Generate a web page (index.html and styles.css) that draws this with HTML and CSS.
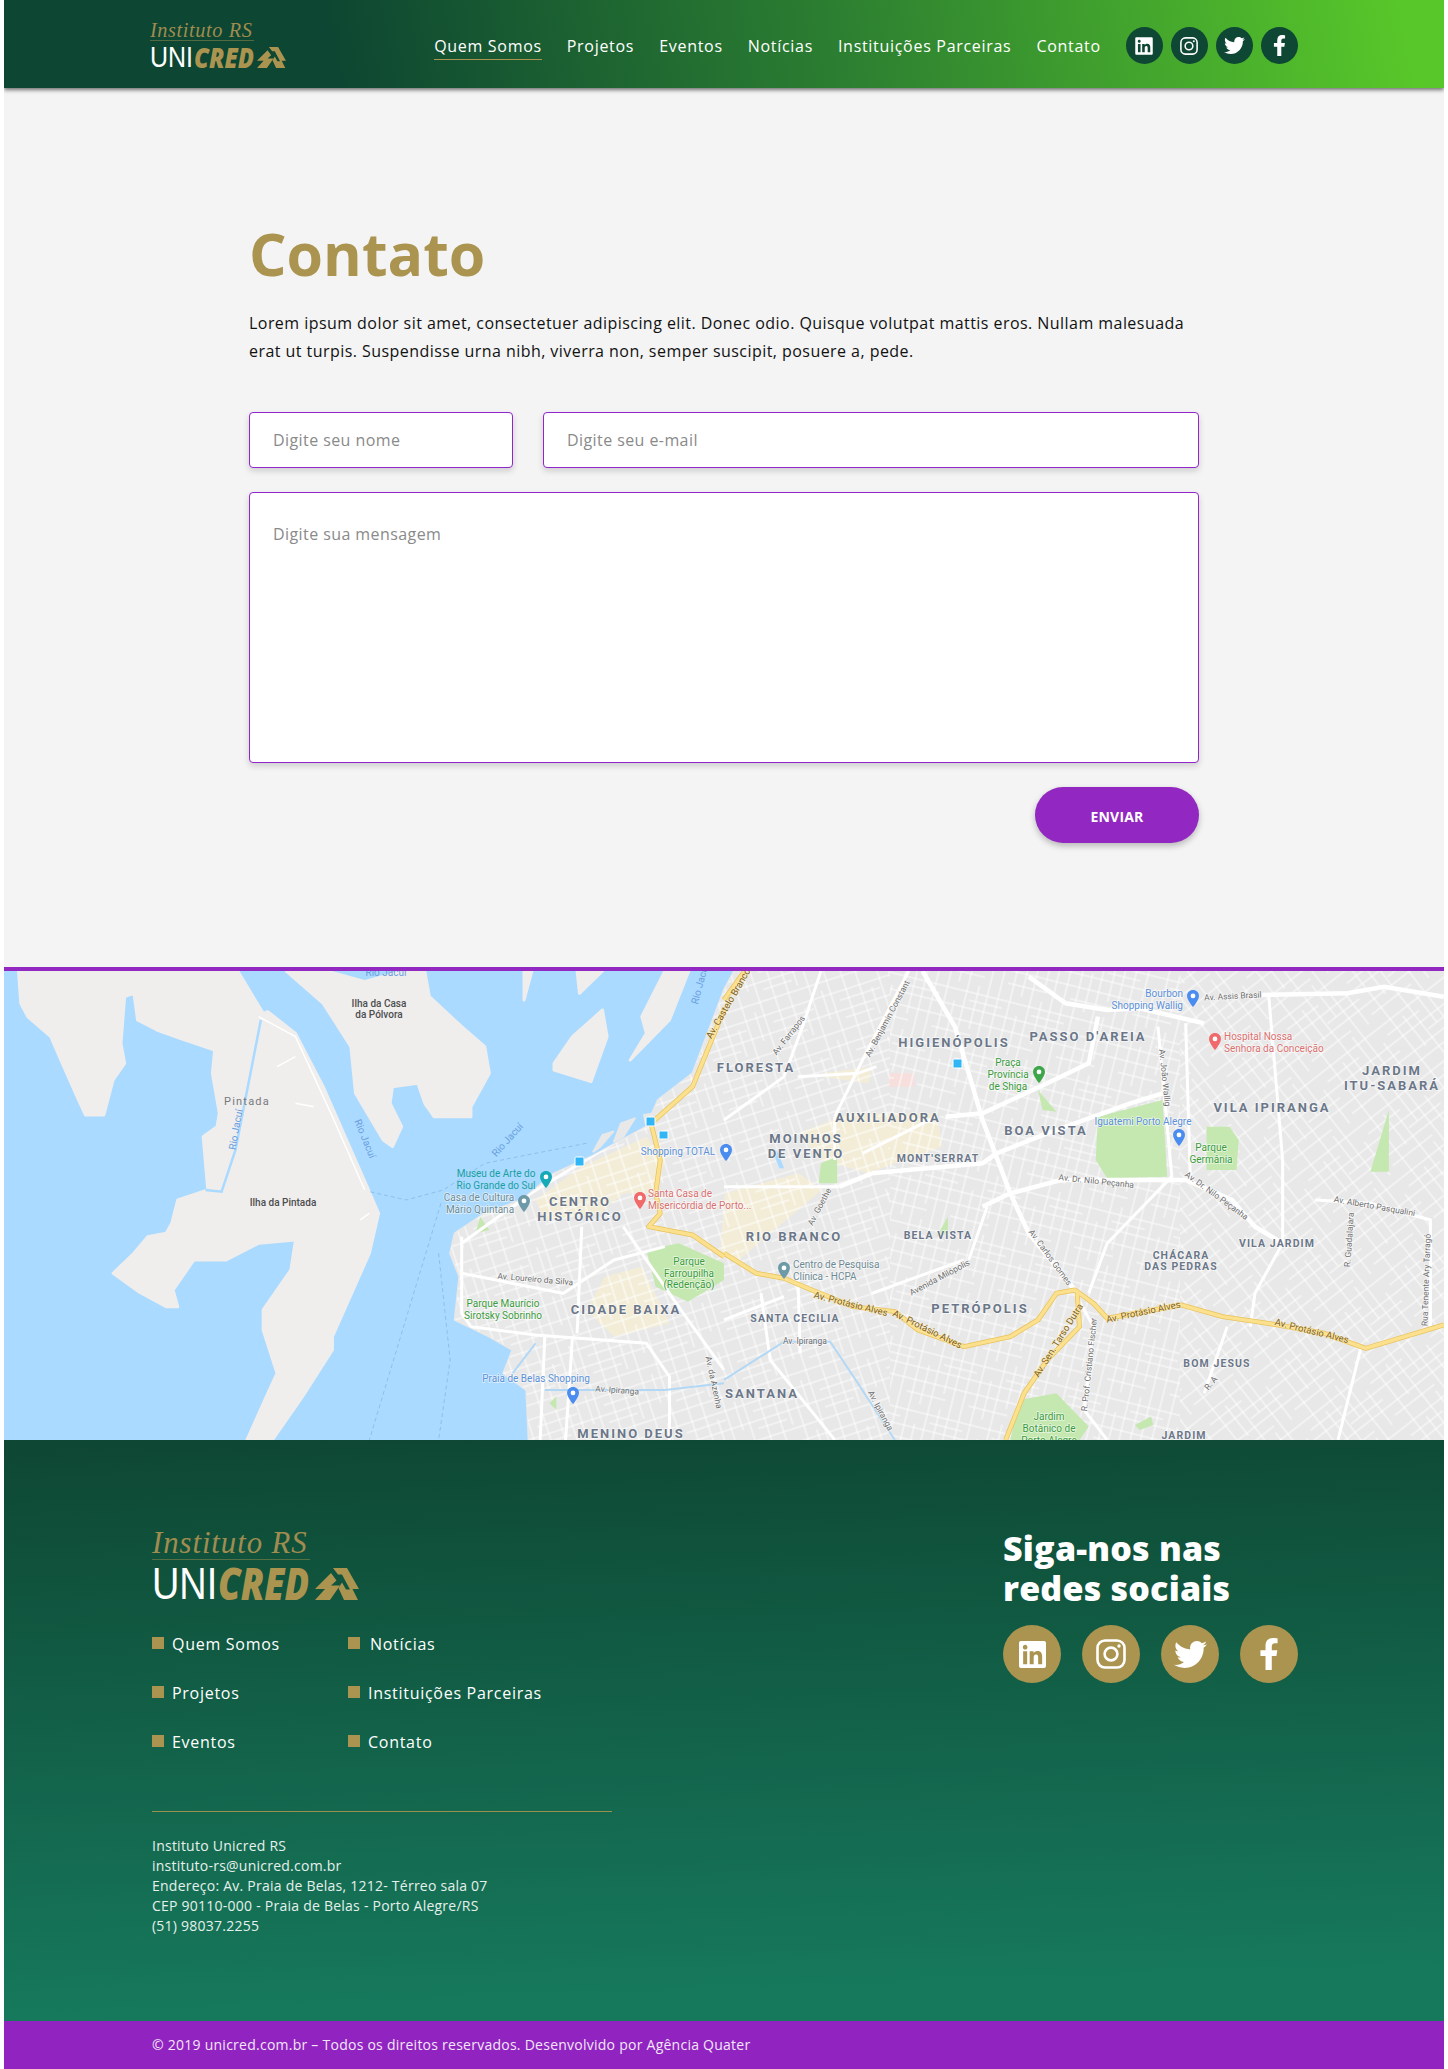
FILE: index.html
```html
<!DOCTYPE html>
<html lang="pt-BR">
<head>
<meta charset="utf-8">
<title>Contato - Instituto Unicred RS</title>
<link rel="stylesheet" href="styles.css">
</head>
<body>
<svg class="defs" width="0" height="0" aria-hidden="true">
  <defs>
    <symbol id="i-linkedin" viewBox="0 0 448 512"><path d="M416 32H31.9C14.3 32 0 46.5 0 64.3v383.4C0 465.5 14.3 480 31.9 480H416c17.6 0 32-14.5 32-32.3V64.3c0-17.8-14.4-32.3-32-32.3zM135.4 416H69V202.2h66.5V416zm-33.2-243c-21.3 0-38.5-17.3-38.5-38.5S80.9 96 102.2 96c21.2 0 38.5 17.3 38.5 38.5 0 21.3-17.2 38.5-38.5 38.5zm282.1 243h-66.4V312c0-24.8-.5-56.7-34.5-56.7-34.6 0-39.9 27-39.9 54.9V416h-66.4V202.2h63.7v29.2h.9c8.9-16.8 30.6-34.5 62.9-34.5 67.2 0 79.7 44.3 79.7 101.9V416z"/></symbol>
    <symbol id="i-instagram" viewBox="0 0 30 30"><rect x="1.5" y="1.5" width="27" height="27" rx="7.5" fill="none" stroke="currentColor" stroke-width="2.6"/><circle cx="15" cy="15" r="6.4" fill="none" stroke="currentColor" stroke-width="2.6"/><circle cx="23" cy="7" r="1.7" fill="currentColor"/></symbol>
    <symbol id="i-twitter" viewBox="0 0 512 512"><path d="M459.37 151.716c.325 4.548.325 9.097.325 13.645 0 138.72-105.583 298.558-298.558 298.558-59.452 0-114.68-17.219-161.137-47.106 8.447.974 16.568 1.299 25.34 1.299 49.055 0 94.213-16.568 130.274-44.832-46.132-.975-84.792-31.188-98.112-72.772 6.498.974 12.995 1.624 19.818 1.624 9.421 0 18.843-1.3 27.614-3.573-48.081-9.747-84.143-51.98-84.143-102.985v-1.299c13.969 7.797 30.214 12.67 47.431 13.319-28.264-18.843-46.781-51.005-46.781-87.391 0-19.492 5.197-37.36 14.294-52.954 51.655 63.675 129.3 105.258 216.365 109.807-1.624-7.797-2.599-15.918-2.599-24.04 0-57.828 46.782-104.934 104.934-104.934 30.213 0 57.502 12.67 76.67 33.137 23.715-4.548 46.456-13.32 66.599-25.34-7.798 24.366-24.366 44.833-46.132 57.827 21.117-2.273 41.584-8.122 60.426-16.243-14.292 20.791-32.161 39.308-52.628 54.253z"/></symbol>
    <symbol id="i-facebook" viewBox="0 0 320 512"><path d="M279.14 288l14.22-92.66h-88.91v-60.13c0-25.35 12.42-50.06 52.24-50.06h40.42V6.26S260.43 0 225.36 0c-73.22 0-121.08 44.38-121.08 124.72v70.62H22.89V288h81.39v224h100.17V288z"/></symbol>
    <symbol id="i-mark" viewBox="0 0 44 32"><path d="M18 0H32L44 21H37.5L43 32H29L23.5 20L27 14.5L31 21.5H35L27 6.5H23Z"/><path d="M16 5L21.5 12.5L16 17.5H25L15 32H0L10 21H0Z"/></symbol>
    <symbol id="i-pin" viewBox="0 0 14 20"><path d="M7 0C3 0 0 3 0 7c0 5 7 13 7 13s7-8 7-13c0-4-3-7-7-7z"/><circle cx="7" cy="7" r="2.8" fill="#fff"/></symbol>
  </defs>
</svg>

<div class="page">
  <header class="topbar">
    <a class="logo logo-sm" href="#">
      <span class="logo-script">Instituto RS</span>
      <span class="logo-rule"></span>
      <span class="logo-word"><span class="logo-uni">UNI</span><span class="logo-cred">CRED</span><svg class="logo-mark"><use href="#i-mark"/></svg></span>
    </a>
    <nav class="topnav">
      <a class="topnav-link is-active" href="#">Quem Somos</a>
      <a class="topnav-link" href="#">Projetos</a>
      <a class="topnav-link" href="#">Eventos</a>
      <a class="topnav-link" href="#">Notícias</a>
      <a class="topnav-link" href="#">Instituições Parceiras</a>
      <a class="topnav-link" href="#">Contato</a>
    </nav>
    <div class="social social-sm">
      <a class="social-btn" href="#"><svg class="ico-li"><use href="#i-linkedin"/></svg></a>
      <a class="social-btn" href="#"><svg class="ico-ig"><use href="#i-instagram"/></svg></a>
      <a class="social-btn" href="#"><svg class="ico-tw"><use href="#i-twitter"/></svg></a>
      <a class="social-btn" href="#"><svg class="ico-fb"><use href="#i-facebook"/></svg></a>
    </div>
  </header>

  <main class="contact">
    <div class="contact-inner">
      <h1 class="contact-title">Contato</h1>
      <p class="contact-text">Lorem ipsum dolor sit amet, consectetuer adipiscing elit. Donec odio. Quisque volutpat mattis eros. Nullam malesuada erat ut turpis. Suspendisse urna nibh, viverra non, semper suscipit, posuere a, pede.</p>
      <form class="form">
        <div class="form-row">
          <input class="field field-name" type="text" placeholder="Digite seu nome">
          <input class="field field-mail" type="email" placeholder="Digite seu e-mail">
        </div>
        <textarea class="field field-msg" placeholder="Digite sua mensagem"></textarea>
        <div class="form-actions"><button class="btn" type="button">ENVIAR</button></div>
      </form>
    </div>
  </main>

  <section class="map">
    <svg class="map-svg" width="1440" height="469" viewBox="4 971 1440 469" xmlns="http://www.w3.org/2000/svg">
      <defs>
        <pattern id="st-a" width="70" height="52" patternUnits="userSpaceOnUse" patternTransform="rotate(-18)">
          <path d="M0 6H70M0 15H42M0 25H70M0 33H30M0 44H70M9 0V52M23 0V52M34 12V40M44 0V52M55 0V30M63 0V52" stroke="#fff" stroke-width=".9" fill="none"/>
        </pattern>
        <pattern id="st-b" width="64" height="60" patternUnits="userSpaceOnUse" patternTransform="rotate(14)">
          <path d="M0 8H64M30 16H64M0 24H64M0 37H64M0 50H40M6 0V60M16 20V60M26 0V60M37 0V44M47 0V60M58 0V60" stroke="#fff" stroke-width=".9" fill="none"/>
        </pattern>
        <pattern id="st-c" width="76" height="66" patternUnits="userSpaceOnUse" patternTransform="rotate(-38)">
          <path d="M0 9H76M0 20H40M0 30H76M36 40H76M0 49H76M0 60H50M12 0V66M24 14V52M34 0V66M47 0V40M56 0V66M68 24V66" stroke="#fff" stroke-width=".9" fill="none"/>
        </pattern>
        <clipPath id="land-clip">
          <path transform="translate(0 960) scale(.4617 .3333)" d="M1590 33L1568 90L1500 340L1425 420L1400 500L1280 590L1200 640L1130 720L1050 760L985 820L975 880L995 950L985 1080L1060 1130L1110 1170L1090 1240L1140 1290L1145 1440H3200V33Z"/>
        </clipPath>
      </defs>
      <rect class="m-water" x="4" y="971" width="1440" height="469"/>

      <g transform="translate(0 960) scale(.4617 .3333)">
        <path class="m-island" d="M40 33L45 130L60 170L110 230L135 310L170 420L185 465H225L245 360L270 310L262 250L270 110L290 100L298 180L340 210L390 235L465 270L460 340L475 460L470 500L440 530L450 690L385 720L372 790L360 820L320 830L290 880L245 940L300 995L360 1040H385L375 990L420 900L490 900L560 850L640 840L630 930L570 1050V1110L600 1240L580 1300L535 1440H590L660 1300L720 1170V1130L800 880L820 760L795 680L700 380L640 220L580 155L570 160L515 33Z"/>
        <path class="m-island" d="M620 33L700 130L760 260L770 400L830 540L850 560L870 500L845 430L850 380L905 370L920 430L940 470L1020 470V440L1060 340L1050 260L1000 200L930 110L920 33Z"/>
        <path class="m-island" d="M1305 150L1240 230L1200 310V330L1280 365L1315 230Z"/>
        <path class="m-island" d="M1135 33V120L1152 33Z"/>
        <path class="m-island" d="M1255 100L1305 33H1250Z"/>
        <path class="m-island" d="M1440 33L1390 170L1400 220L1365 300L1450 180L1492 33Z"/>
        <path class="m-water" d="M720 33L790 60L860 33Z"/>
        <path class="m-river" d="M565 180L510 570L480 695L445 690"/>
        <path class="m-ferry" d="M1270 550L1050 610L960 690L880 720L800 695M955 730L800 1440M950 880L975 1200L950 1440"/>
        <path class="m-road-thin" d="M560 170L640 230L720 470L790 690M640 290L600 320M680 440L640 430M780 780L800 760"/>
        <path class="m-land" d="M1590 33L1568 90L1500 340L1425 420L1400 500L1280 590L1200 640L1130 720L1050 760L985 820L975 880L995 950L985 1080L1060 1130L1110 1170L1090 1240L1140 1290L1145 1440H3200V33Z"/>
        <path class="m-land" d="M1395 465L1418 460L1400 500ZM1345 490L1375 475L1350 530L1330 545ZM1305 525L1328 515L1300 560L1285 575Z"/>
      </g>

      <g clip-path="url(#land-clip)">
        <g transform="translate(0 960) scale(.4617 .3333)">
          <path class="m-block" d="M1260 620L1400 530L1440 600L1420 700L1350 700L1300 760L1180 780L1160 720Z"/>
          <path class="m-block" d="M1310 950L1390 920L1450 1090L1330 1130L1270 1050Z"/>
          <path class="m-block" d="M1570 700L1730 640L1780 690L1600 900L1560 880Z"/>
          <path class="m-block" d="M1730 520L1840 460L2030 460L2040 560L1880 640L1780 600Z"/>
          <path class="m-block" d="M1780 340L1890 320L1880 370L1780 350Z"/>
          <path class="m-pink" d="M1925 340H1980V380H1925Z"/>
        </g>
        <rect x="440" y="971" width="450" height="469" fill="url(#st-a)"/>
        <rect x="890" y="971" width="290" height="469" fill="url(#st-b)"/>
        <rect x="1180" y="971" width="270" height="469" fill="url(#st-c)"/>
        <g transform="translate(0 960) scale(.4617 .3333)">
          <path class="m-park" d="M1400 870L1470 850L1568 910V960L1490 1025L1420 980Z"/>
          <path class="m-park" d="M1040 770L1060 810L1030 820Z"/>
          <path class="m-park" d="M1190 1330L1205 1310V1350Z"/>
          <path class="m-road-side" d="M1000 830V1060L1020 1100L1160 1125L1400 1150L1450 1250V1440M1000 940L1220 1000L1330 900L1440 860M1180 1130L1170 1440M1240 1130L1225 1440M1260 800L1250 1120M1400 490L1150 700L1000 850M1350 800L1480 1060L1568 1230"/>
          <path class="m-ipiranga" d="M1160 1150L1110 1240M1180 1290H1440L1568 1270"/>
        </g>
        <g transform="translate(724 960) scale(.4617 .3333)">
          <path class="m-park" d="M810 470L950 420L960 650L830 655L805 600Z"/>
          <path class="m-park" d="M1045 500H1095L1115 540L1110 630H1045Z"/>
          <path class="m-park" d="M640 1320L720 1300L790 1400L770 1440H620Z"/>
          <path class="m-park" d="M680 390L720 455L690 450Z"/>
          <path class="m-park" d="M205 670L210 610L245 590V670Z"/>
          <path class="m-park" d="M1400 635L1440 450V635Z"/>
          <path class="m-park" d="M460 830L485 770L485 820Z"/>
          <path class="m-park" d="M890 1395L925 1370L930 1395L900 1410Z"/>
          <path class="m-water" d="M115 570L130 625H120L110 590Z"/>
          <path class="m-road" d="M430 33L500 200L560 480L620 700L660 820L760 990M660 50L740 130L830 150L900 145L1040 190M480 470L560 460L700 370L790 310L810 170M1165 105L1350 100L1430 80L1559 110M590 580L700 520L880 430L950 400M320 640L560 610L590 580M250 680L320 640M560 740L620 700L730 660H1000L1100 720L1150 800L1210 850"/>
          <path class="m-road-side" d="M210 33L170 200L130 350L0 480M400 33L300 300L240 470M160 350L290 340L330 320M530 900L570 740M1180 110L1210 600V850L1150 1000L1140 1100M940 200L970 650L830 850L790 1000M1000 190L1010 660M1280 720L1400 730L1530 780V1100M1380 1160L1330 1440M320 1000L520 900M80 1000L100 1200L240 1440M160 950L165 1180M760 1000L800 1100L780 1350L830 1440M1090 1100L1040 1300M0 680L250 680M0 1080L130 1010M300 580L460 470M240 600V470"/>
          <path class="m-ipiranga" d="M0 1260L130 1145H230L290 1270L370 1440"/>
          <path class="m-ave-edge" d="M45 33L0 120"/>
          <path class="m-ave" d="M45 33L0 120"/>
          <path class="m-ave-edge" d="M0 880L70 940L130 955L190 990L280 1040L370 1055L420 1110L520 1160L620 1130L680 1080L720 1000L760 990L800 1030L830 1075L990 1035L1080 1070L1200 1095L1300 1120L1390 1165L1559 1095M765 1000L770 1100L700 1200L650 1300L610 1440"/>
          <path class="m-ave" d="M0 880L70 940L130 955L190 990L280 1040L370 1055L420 1110L520 1160L620 1130L680 1080L720 1000L760 990L800 1030L830 1075L990 1035L1080 1070L1200 1095L1300 1120L1390 1165L1559 1095M765 1000L770 1100L700 1200L650 1300L610 1440"/>
        </g>
        <g transform="translate(0 960) scale(.4617 .3333)">
          <path class="m-ave-edge" d="M1568 150L1500 380L1410 490L1430 600L1420 700L1430 760L1405 800L1500 825L1568 890"/>
          <path class="m-ave" d="M1568 150L1500 380L1410 490L1430 600L1420 700L1430 760L1405 800L1500 825L1568 890"/>
        </g>
      </g>

      <!-- pins -->
      <use class="pin-teal" href="#i-pin" x="540" y="1171" width="12" height="17"/>
      <use class="pin-gray" href="#i-pin" x="518" y="1195" width="12" height="17"/>
      <use class="pin-red" href="#i-pin" x="634" y="1192" width="12" height="17"/>
      <use class="pin-blue" href="#i-pin" x="720" y="1144" width="12" height="17"/>
      <use class="pin-blue" href="#i-pin" x="567" y="1387" width="12" height="17"/>
      <use class="pin-gray" href="#i-pin" x="778" y="1262" width="12" height="17"/>
      <use class="pin-blue" href="#i-pin" x="1187" y="990" width="12" height="17"/>
      <use class="pin-red" href="#i-pin" x="1209" y="1033" width="12" height="17"/>
      <use class="pin-green" href="#i-pin" x="1033" y="1066" width="12" height="17"/>
      <use class="pin-blue" href="#i-pin" x="1173" y="1129" width="12" height="17"/>
      <rect class="m-metro" x="646" y="1117" width="9" height="9" rx="1.5"/>
      <rect class="m-metro" x="575" y="1157" width="9" height="9" rx="1.5"/>
      <rect class="m-metro" x="659" y="1131" width="9" height="8" rx="1.5"/>
      <rect class="m-metro" x="953" y="1059" width="9" height="9" rx="1.5"/>

      <!-- labels: islands and river -->
      <text class="t t-dark" x="379" y="1007">Ilha da Casa</text>
      <text class="t t-dark" x="379" y="1018">da Pólvora</text>
      <text class="t t-gray t-spaced" x="247" y="1105">Pintada</text>
      <text class="t t-dark" x="283" y="1206">Ilha da Pintada</text>
      <text class="t t-river" x="386" y="976">Rio Jacuí</text>
      <text class="t t-river" transform="rotate(-80 239 1130)" x="239" y="1130">Rio Jacuí</text>
      <text class="t t-river" transform="rotate(68 362 1140)" x="362" y="1140">Rio Jacuí</text>
      <text class="t t-river" transform="rotate(-48 510 1142)" x="510" y="1142">Rio Jacuí</text>
      <text class="t t-river" transform="rotate(-75 703 985)" x="703" y="985">Rio Jacuí</text>

      <!-- labels: districts -->
      <text class="t t-area" x="580" y="1206">CENTRO</text>
      <text class="t t-area" x="580" y="1221">HISTÓRICO</text>
      <text class="t t-area" x="626" y="1314">CIDADE BAIXA</text>
      <text class="t t-area" x="631" y="1438">MENINO DEUS</text>
      <text class="t t-area" x="756" y="1072">FLORESTA</text>
      <text class="t t-area" x="954" y="1047">HIGIENÓPOLIS</text>
      <text class="t t-area" x="1088" y="1041">PASSO D'AREIA</text>
      <text class="t t-area" x="1392" y="1075">JARDIM</text>
      <text class="t t-area" x="1392" y="1090">ITU-SABARÁ</text>
      <text class="t t-area" x="1272" y="1112">VILA IPIRANGA</text>
      <text class="t t-area" x="888" y="1122">AUXILIADORA</text>
      <text class="t t-area" x="806" y="1143">MOINHOS</text>
      <text class="t t-area" x="806" y="1158">DE VENTO</text>
      <text class="t t-area" x="1046" y="1135">BOA VISTA</text>
      <text class="t t-area" x="794" y="1241">RIO BRANCO</text>
      <text class="t t-area" x="980" y="1313">PETRÓPOLIS</text>
      <text class="t t-area" x="762" y="1398">SANTANA</text>
      <text class="t t-area2" x="938" y="1162">MONT'SERRAT</text>
      <text class="t t-area2" x="938" y="1239">BELA VISTA</text>
      <text class="t t-area2" x="1277" y="1247">VILA JARDIM</text>
      <text class="t t-area2" x="1181" y="1259">CHÁCARA</text>
      <text class="t t-area2" x="1181" y="1270">DAS PEDRAS</text>
      <text class="t t-area2" x="795" y="1322">SANTA CECILIA</text>
      <text class="t t-area2" x="1217" y="1367">BOM JESUS</text>
      <text class="t t-area2" x="1184" y="1439">JARDIM</text>

      <!-- labels: places -->
      <text class="t t-teal" x="496" y="1177">Museu de Arte do</text>
      <text class="t t-teal" x="496" y="1189">Rio Grande do Sul</text>
      <text class="t t-place" x="479" y="1201">Casa de Cultura</text>
      <text class="t t-place" x="480" y="1213">Mário Quintana</text>
      <text class="t t-red t-start" x="648" y="1197">Santa Casa de</text>
      <text class="t t-red t-start" x="648" y="1209">Misericórdia de Porto...</text>
      <text class="t t-blue" x="678" y="1155">Shopping TOTAL</text>
      <text class="t t-green" x="689" y="1265">Parque</text>
      <text class="t t-green" x="689" y="1277">Farroupilha</text>
      <text class="t t-green" x="689" y="1288">(Redenção)</text>
      <text class="t t-green" x="503" y="1307">Parque Maurício</text>
      <text class="t t-green" x="503" y="1319">Sirotsky Sobrinho</text>
      <text class="t t-blue" x="536" y="1382">Praia de Belas Shopping</text>
      <text class="t t-blue t-end" x="1183" y="997">Bourbon</text>
      <text class="t t-blue t-end" x="1183" y="1009">Shopping Wallig</text>
      <text class="t t-red t-start" x="1224" y="1040">Hospital Nossa</text>
      <text class="t t-red t-start" x="1224" y="1052">Senhora da Conceição</text>
      <text class="t t-green" x="1008" y="1066">Praça</text>
      <text class="t t-green" x="1008" y="1078">Província</text>
      <text class="t t-green" x="1008" y="1090">de Shiga</text>
      <text class="t t-blue" x="1143" y="1125">Iguatemi Porto Alegre</text>
      <text class="t t-green" x="1211" y="1151">Parque</text>
      <text class="t t-green" x="1211" y="1163">Germânia</text>
      <text class="t t-place t-start" x="793" y="1268">Centro de Pesquisa</text>
      <text class="t t-place t-start" x="793" y="1280">Clínica - HCPA</text>
      <text class="t t-green" x="1049" y="1420">Jardim</text>
      <text class="t t-green" x="1049" y="1432">Botânico de</text>
      <text class="t t-green" x="1049" y="1444">Porto Alegre</text>

      <!-- labels: streets -->
      <text class="t t-street" transform="rotate(5 535 1282)" x="535" y="1282">Av. Loureiro da Silva</text>
      <text class="t t-street" transform="rotate(4 617 1393)" x="617" y="1393">Av. Ipiranga</text>
      <text class="t t-street" transform="rotate(78 711 1383)" x="711" y="1383">Av. da Azenha</text>
      <text class="t t-street" transform="rotate(-3 1233 999)" x="1233" y="999">Av. Assis Brasil</text>
      <text class="t t-street" transform="rotate(84 1162 1078)" x="1162" y="1078">Av. João Wallig</text>
      <text class="t t-street" transform="rotate(-52 791 1037)" x="791" y="1037">Av. Farrapos</text>
      <text class="t t-street" transform="rotate(-62 890 1020)" x="890" y="1020">Av. Benjamin Constant</text>
      <text class="t t-street" transform="rotate(6 1096 1184)" x="1096" y="1184">Av. Dr. Nilo Peçanha</text>
      <text class="t t-street" transform="rotate(36 1215 1198)" x="1215" y="1198">Av. Dr. Nilo Peçanha</text>
      <text class="t t-street" transform="rotate(10 1374 1209)" x="1374" y="1209">Av. Alberto Pasqualini</text>
      <text class="t t-street" transform="rotate(-62 822 1208)" x="822" y="1208">Av. Goethe</text>
      <text class="t t-street" transform="rotate(54 1048 1259)" x="1048" y="1259">Av. Carlos Gomes</text>
      <text class="t t-street" transform="rotate(-86 1352 1240)" x="1352" y="1240">R. Guadalajara</text>
      <text class="t t-street" transform="rotate(-88 1429 1280)" x="1429" y="1280">Rua Tenente Ary Tarragó</text>
      <text class="t t-street" transform="rotate(-28 941 1280)" x="941" y="1280">Avenida Milópolis</text>
      <text class="t t-street" x="805" y="1344">Av. Ipiranga</text>
      <text class="t t-street" transform="rotate(-84 1092 1365)" x="1092" y="1365">R. Prof. Cristiano Fischer</text>
      <text class="t t-street" transform="rotate(-50 1213 1385)" x="1213" y="1385">R. A</text>
      <text class="t t-street" transform="rotate(62 878 1412)" x="878" y="1412">Av. Ipiranga</text>
      <text class="t t-ave" transform="rotate(-60 731 1005)" x="731" y="1005">Av. Castelo Branco</text>
      <text class="t t-ave" transform="rotate(14 850 1307)" x="850" y="1307">Av. Protásio Alves</text>
      <text class="t t-ave" transform="rotate(26 926 1332)" x="926" y="1332">Av. Protásio Alves</text>
      <text class="t t-ave" transform="rotate(-12 1144 1315)" x="1144" y="1315">Av. Protásio Alves</text>
      <text class="t t-ave" transform="rotate(14 1311 1334)" x="1311" y="1334">Av. Protásio Alves</text>
      <text class="t t-ave" transform="rotate(-58 1061 1342)" x="1061" y="1342">Av. Sen. Tarso Dutra</text>
    </svg>
  </section>

  <footer class="footer">
    <div class="footer-main">
      <div class="footer-left">
        <a class="logo logo-lg" href="#">
          <span class="logo-script">Instituto RS</span>
          <span class="logo-rule"></span>
          <span class="logo-word"><span class="logo-uni">UNI</span><span class="logo-cred">CRED</span><svg class="logo-mark"><use href="#i-mark"/></svg></span>
        </a>
        <ul class="footer-nav">
          <li class="footer-item"><a href="#">Quem Somos</a></li>
          <li class="footer-item footer-item-shift"><a href="#">Notícias</a></li>
          <li class="footer-item"><a href="#">Projetos</a></li>
          <li class="footer-item"><a href="#">Instituições Parceiras</a></li>
          <li class="footer-item"><a href="#">Eventos</a></li>
          <li class="footer-item"><a href="#">Contato</a></li>
        </ul>
        <address class="footer-address">
          Instituto Unicred RS<br>
          instituto-rs@unicred.com.br<br>
          Endereço: Av. Praia de Belas, 1212- Térreo sala 07<br>
          CEP 90110-000 - Praia de Belas - Porto Alegre/RS<br>
          (51) 98037.2255
        </address>
      </div>
      <div class="footer-right">
        <h2 class="follow-title">Siga-nos nas<br>redes sociais</h2>
        <div class="social social-lg">
          <a class="social-btn" href="#"><svg class="ico-li"><use href="#i-linkedin"/></svg></a>
          <a class="social-btn" href="#"><svg class="ico-ig"><use href="#i-instagram"/></svg></a>
          <a class="social-btn" href="#"><svg class="ico-tw"><use href="#i-twitter"/></svg></a>
          <a class="social-btn" href="#"><svg class="ico-fb"><use href="#i-facebook"/></svg></a>
        </div>
      </div>
    </div>
    <div class="copyright">© 2019 unicred.com.br – Todos os direitos reservados. Desenvolvido por Agência Quater</div>
  </footer>
</div>
</body>
</html>
```
FILE: styles.css
```css
* { box-sizing: border-box; }
html, body { margin: 0; padding: 0; background: #fff; }
body { font-family: "Open Sans", "Liberation Sans", sans-serif; color: #111; }
a { color: inherit; text-decoration: none; }
.defs { position: absolute; }
.page { width: 1440px; margin: 0 auto; overflow: hidden; }

/* Header */
.topbar {
  position: relative;
  z-index: 2;
  height: 88px;
  padding-left: 146px;
  display: flex;
  align-items: center;
  background: linear-gradient(80deg, #0d4632 23%, #2c7f31 58%, #58c72a 97%);
  box-shadow: 0 2px 4px rgba(0, 0, 0, .55);
}
.topnav { display: flex; gap: 25px; margin-left: 148px; margin-top: 7px; }
.topnav-link {
  font-size: 16px;
  line-height: 22px;
  padding-bottom: 2px;
  letter-spacing: .7px;
  color: #fff;
  border-bottom: 1px solid transparent;
}
.topnav-link.is-active { border-bottom-color: #ab9450; }

/* Logo */
.logo { display: flex; flex-direction: column; align-items: flex-start; }
.logo-sm { font-size: 29px; }
.logo-lg { font-size: 44px; }
.logo-script {
  display: block;
  font-family: "Liberation Serif", serif;
  font-style: italic;
  font-size: .7em;
  line-height: 1;
  height: 1em;
  letter-spacing: .03em;
  color: #a08c50;
}
.logo-rule { display: block; width: 3.6em; height: 1px; background: rgba(171, 148, 80, .45); }
.logo-word { display: flex; align-items: flex-start; height: .727em; margin-top: .19em; line-height: .727em; }
.logo-uni {
  display: block;
  width: 1.39em;
  font-family: "Liberation Sans", sans-serif;
  color: #fff;
  transform: scaleX(.86);
  transform-origin: 0 50%;
}
.logo-cred {
  display: block;
  width: 2em;
  margin-left: .115em;
  margin-top: -.03em;
  font-family: "Open Sans", sans-serif;
  font-weight: 800;
  font-style: italic;
  color: #ab9450;
  transform: scaleX(.82);
  transform-origin: 0 50%;
}
.logo-mark { width: 1em; height: .727em; margin-left: .19em; fill: #ab9450; }

/* Social */
.social { display: flex; }
.social-btn { display: flex; align-items: center; justify-content: center; border-radius: 50%; }
.social-sm { gap: 8px; margin-left: 25px; margin-top: 3px; }
.social-sm .social-btn { width: 37px; height: 37px; background: #0e4733; color: #fff; fill: #fff; }
.social-sm .ico-li { width: 18px; height: 20px; }
.social-sm .ico-ig { width: 18px; height: 18px; }
.social-sm .ico-tw { width: 21px; height: 21px; }
.social-sm .ico-fb { width: 13px; height: 21px; }
.social-lg { gap: 21px; margin-top: 17px; }
.social-lg .social-btn { width: 58px; height: 58px; background: #ab9450; color: #fff; fill: #fff; }
.social-lg .ico-li { width: 27px; height: 31px; }
.social-lg .ico-ig { width: 30px; height: 30px; }
.social-lg .ico-tw { width: 33px; height: 33px; }
.social-lg .ico-fb { width: 20px; height: 32px; }

/* Contact */
.contact { background: #f4f4f4; padding: 129px 0 124px; }
.contact-inner { width: 950px; margin: 0 auto; }
.contact-title { margin: 0; font-size: 59px; line-height: 72px; font-weight: 700; color: #ab9450; }
.contact-text { margin: 20px 0 47px; font-size: 16px; line-height: 28px; letter-spacing: .45px; color: #111; max-width: 945px; }
.form-row { display: flex; gap: 30px; margin-bottom: 24px; }
.field {
  display: block;
  border: 1px solid #9325cc;
  border-radius: 4px;
  background: #fff;
  box-shadow: 0 3px 6px rgba(0, 0, 0, .16);
  font-family: "Open Sans", sans-serif;
  font-size: 16px;
  letter-spacing: .42px;
  color: #333;
  padding: 0 23px;
  outline: none;
  resize: none;
}
.field::placeholder { color: #8a8a8a; opacity: 1; }
.field-name { width: 264px; height: 56px; }
.field-mail { flex: 1; height: 56px; }
.field-msg { width: 100%; height: 271px; padding-top: 30px; line-height: 22px; }
.form-actions { display: flex; justify-content: flex-end; margin-top: 24px; }
.btn {
  width: 164px;
  height: 56px;
  border: 0;
  border-radius: 28px;
  background: #9227c1;
  color: #fff;
  font-family: "Open Sans", sans-serif;
  font-size: 14px;
  font-weight: 700;
  letter-spacing: .2px;
  padding-top: 4px;
  box-shadow: 0 3px 6px rgba(0, 0, 0, .25);
}

/* Map */
.map { border-top: 4px solid #9227c1; }
.map-svg { display: block; font-family: Roboto, "Liberation Sans", sans-serif; }
.m-water { fill: #aadaff; }
.m-island { fill: #efeeed; stroke: #efeeed; stroke-width: 3px; stroke-linejoin: round; vector-effect: non-scaling-stroke; }
.m-land { fill: #e8e8e8; stroke: #e8e8e8; stroke-width: 2px; stroke-linejoin: round; vector-effect: non-scaling-stroke; }
.m-block { fill: #f8efd2; opacity: .7; }
.m-pink { fill: #f6dfdc; }
.m-park { fill: #c5e8b0; }
.m-river { fill: none; stroke: #aadaff; stroke-width: 2.5px; vector-effect: non-scaling-stroke; }
.m-ferry { fill: none; stroke: #8fbfe8; stroke-width: 1px; stroke-dasharray: 4 3; vector-effect: non-scaling-stroke; }
.m-road-thin { fill: none; stroke: #fff; stroke-width: 1.5px; vector-effect: non-scaling-stroke; }
.m-road { fill: none; stroke: #fff; stroke-width: 4.5px; vector-effect: non-scaling-stroke; }
.m-road-side { fill: none; stroke: #fff; stroke-width: 3px; vector-effect: non-scaling-stroke; }
.m-ipiranga { fill: none; stroke: #b3d8f5; stroke-width: 2px; vector-effect: non-scaling-stroke; }
.m-ave { fill: none; stroke: #fbe08e; stroke-width: 3.5px; stroke-linejoin: round; vector-effect: non-scaling-stroke; }
.m-ave-edge { fill: none; stroke: #e8c25c; stroke-width: 5px; stroke-linejoin: round; vector-effect: non-scaling-stroke; }
.m-metro { fill: #31b6f5; stroke: #fff; stroke-width: 1px; }
.pin-teal { fill: #17a9b5; }
.pin-gray { fill: #6d9aa6; }
.pin-red { fill: #f0696b; }
.pin-blue { fill: #4a8cf0; }
.pin-green { fill: #3ea64a; }
.t { font-size: 10px; text-anchor: middle; fill: #666; paint-order: stroke; stroke: rgba(255, 255, 255, .65); stroke-width: 1.5px; }
.t-start { text-anchor: start; }
.t-end { text-anchor: end; }
.t-dark { fill: #4d4d4d; font-weight: 500; stroke: none; }
.t-gray { fill: #77797c; stroke: none; }
.t-spaced { letter-spacing: 1.2px; font-size: 11px; }
.t-river { fill: #6a9ee0; stroke: none; font-size: 10px; }
.t-area { font-size: 13px; font-weight: 700; letter-spacing: 2px; fill: #6b7789; }
.t-area2 { font-size: 10.5px; font-weight: 700; letter-spacing: 1.1px; fill: #6b7789; }
.t-teal { fill: #1b9fa1; stroke: none; }
.t-place { fill: #6d8a94; }
.t-red { fill: #d9706f; }
.t-blue { fill: #5b90d6; }
.t-green { fill: #3b9b3c; }
.t-street { font-size: 8.5px; fill: #6e6e6e; }
.t-ave { font-size: 9.5px; fill: #80601c; stroke: rgba(255, 240, 190, .6); }

/* Footer */
.footer { background: linear-gradient(178deg, #0e4733 0, #16795c 581px); }
.footer-main { display: flex; height: 581px; padding: 88px 0 0 148px; }
.footer-left { width: 460px; }
.footer-nav {
  list-style: none;
  margin: 19px 0 0;
  padding: 0;
  display: grid;
  grid-template-columns: 196px auto;
  grid-auto-rows: 49px;
}
.footer-item {
  display: flex;
  align-items: center;
  gap: 8px;
  font-size: 16px;
  letter-spacing: .72px;
  color: #fff;
}
.footer-item::before { content: ""; width: 12px; height: 12px; background: #ab9450; flex: none; margin-top: -1px; }
.footer-item-shift { gap: 10px; }
.footer-address {
  margin-top: 45px;
  padding-top: 24px;
  border-top: 1px solid #9a8f4e;
  font-style: normal;
  font-size: 14px;
  line-height: 20px;
  letter-spacing: .24px;
  color: #e6f0ec;
}
.footer-right { margin-left: 391px; }
.follow-title { margin: 0; font-size: 34px; line-height: 40px; font-weight: 800; letter-spacing: .2px; color: #fff; }
.copyright {
  height: 48px;
  padding: 14px 0 0 148px;
  background: #9124c0;
  font-size: 14px;
  line-height: 20px;
  letter-spacing: .25px;
  color: #f2e6f8;
}
```
